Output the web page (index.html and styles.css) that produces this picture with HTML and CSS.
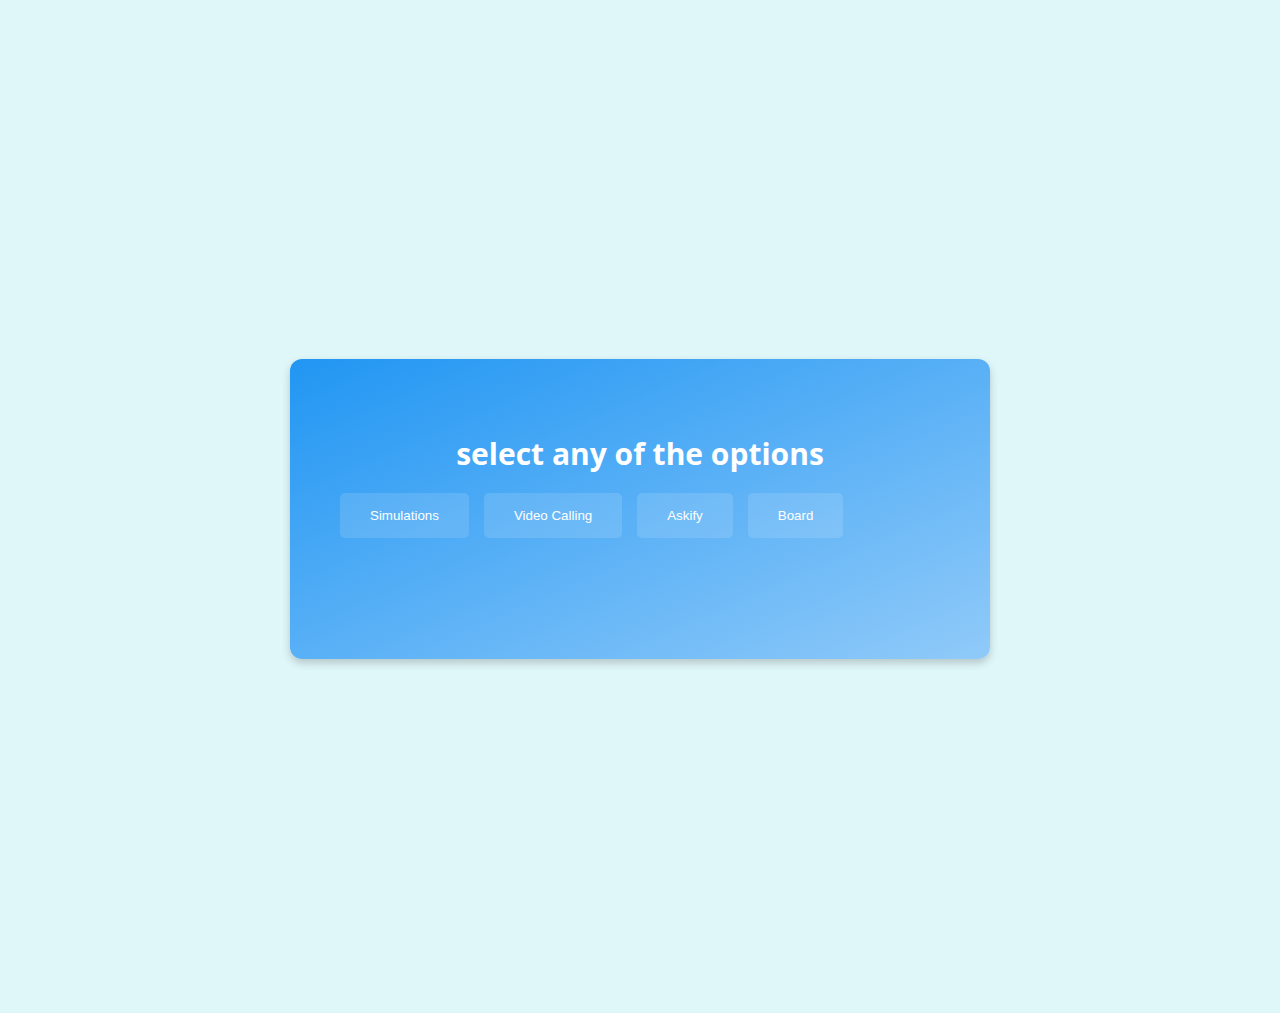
FILE: index.html
```html
<!DOCTYPE html>
<html>
<head>
<meta charset="utf-8">
<link rel="stylesheet" href="styles.css">
</head>
<body>
<div class="card">
  <h1 class="title">select any of the options</h1>
  <div class="options">
    <button class="opt">Simulations</button>
    <button class="opt">Video Calling</button>
    <button class="opt">Askify</button>
    <button class="opt">Board</button>
  </div>
</div>
</body>
</html>
```
FILE: styles.css
```css
html, body {
  margin: 0;
  padding: 0;
}
body {
  background: #e0f7fa;
  height: 1013px;
  box-sizing: border-box;
  padding-top: 5px;
  display: flex;
  align-items: center;
  justify-content: center;
  font-family: "Open Sans", "Noto Sans", sans-serif;
}
.card {
  width: 700px;
  height: 300px;
  box-sizing: border-box;
  padding: 50px;
  border-radius: 12px;
  background: linear-gradient(to bottom right, #2196f3, #90caf9);
  box-shadow: 0 4px 8px rgba(0, 0, 0, 0.2);
}
.title {
  margin: 25px 0 19px;
  text-align: center;
  color: #fff;
  font-size: 30px;
  line-height: 40px;
  font-weight: 700;
}
.options {
  display: flex;
  gap: 15px;
}
.opt {
  font-family: "Liberation Sans", Arial, sans-serif;
  font-size: 13.333px;
  line-height: 15px;
  color: #fff;
  background: rgba(255, 255, 255, 0.13);
  border: none;
  border-radius: 5px;
  padding: 15px 30px;
  margin: 0;
}
```
